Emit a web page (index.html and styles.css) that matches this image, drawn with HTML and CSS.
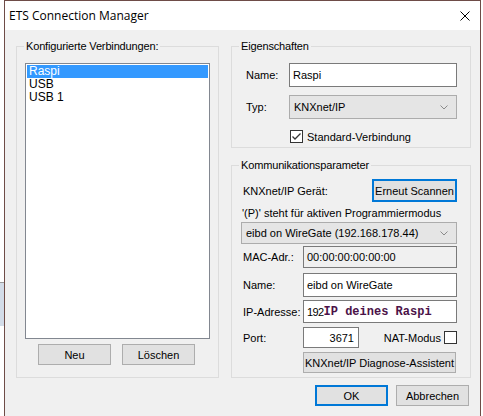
FILE: index.html
```html
<!DOCTYPE html>
<html lang="de">
<head>
<meta charset="utf-8">
<title>ETS Connection Manager</title>
<link rel="stylesheet" href="styles.css">
</head>
<body>
<div class="backdrop"></div>
<div class="window">
  <div class="titlebar">
    <span class="title">ETS Connection Manager</span>
    <svg class="close" width="10" height="10" viewBox="0 0 10 10"><path d="M0.5 0.5 L9.5 9.5 M9.5 0.5 L0.5 9.5" stroke="#000" stroke-width="1" fill="none"/></svg>
  </div>
  <div class="client">
    <div class="columns">
      <div class="group group-left">
        <div class="group-title">Konfigurierte Verbindungen:</div>
        <div class="listbox">
          <div class="item sel">Raspi</div>
          <div class="item">USB</div>
          <div class="item">USB 1</div>
        </div>
        <div class="list-buttons">
          <div class="btn">Neu</div>
          <div class="btn">Löschen</div>
        </div>
      </div>
      <div class="right-col">
        <div class="group props">
          <div class="group-title">Eigenschaften</div>
          <div class="prow name-row">
            <span class="plabel">Name:</span>
            <div class="field field-name">Raspi</div>
          </div>
          <div class="prow typ-row">
            <span class="plabel">Typ:</span>
            <div class="select select-typ"><span>KNXnet/IP</span><svg width="8" height="5" viewBox="0 0 8 5"><path d="M0.5 0.5 L4 4 L7.5 0.5" stroke="#8a8a8a" fill="none"/></svg></div>
          </div>
          <div class="prow check-row">
            <span class="checkbox"><svg width="11" height="11" viewBox="0 0 11 11"><path d="M1.5 5.5 L4 8 L9.5 2.5" stroke="#333" stroke-width="1.3" fill="none"/></svg></span>
            <span class="check-label">Standard-Verbindung</span>
          </div>
        </div>
        <div class="group comm">
          <div class="group-title">Kommunikationsparameter</div>
          <div class="crow row-device">
            <span class="dlabel">KNXnet/IP Gerät:</span>
            <div class="btn btn-focus btn-scan">Erneut Scannen</div>
          </div>
          <div class="crow hint">'(P)' steht für aktiven Programmiermodus</div>
          <div class="crow">
            <div class="select select-device"><span>eibd on WireGate (192.168.178.44)</span><svg width="8" height="5" viewBox="0 0 8 5"><path d="M0.5 0.5 L4 4 L7.5 0.5" stroke="#8a8a8a" fill="none"/></svg></div>
          </div>
          <div class="crow row-mac">
            <span class="clabel">MAC-Adr.:</span>
            <div class="field field-c field-readonly">00:00:00:00:00:00</div>
          </div>
          <div class="crow row-name">
            <span class="clabel">Name:</span>
            <div class="field field-c field-h24">eibd on WireGate</div>
          </div>
          <div class="crow row-ip">
            <span class="clabel">IP-Adresse:</span>
            <div class="field field-c field-ip"><span class="ip-value">192</span><span class="ip-note">IP deines Raspi</span></div>
          </div>
          <div class="crow row-port">
            <span class="clabel">Port:</span>
            <div class="field field-port">3671</div>
            <span class="nat-label">NAT-Modus</span>
            <span class="checkbox"></span>
          </div>
          <div class="crow row-diag">
            <div class="btn btn-diag">KNXnet/IP Diagnose-Assistent</div>
          </div>
        </div>
      </div>
    </div>
    <div class="dialog-buttons">
      <div class="btn btn-focus">OK</div>
      <div class="btn">Abbrechen</div>
    </div>
  </div>
</div>
</body>
</html>
```
FILE: styles.css
```css
* { box-sizing: border-box; }
html, body { margin: 0; padding: 0; }
body {
  background: #fff;
  font-family: "Liberation Sans", Arial, sans-serif;
  font-size: 11px;
  color: #000;
  overflow: hidden;
  height: 416px;
  position: relative;
}
.backdrop {
  position: absolute;
  left: 0;
  top: 282px;
  width: 4px;
  height: 44px;
  background: #d3dce8;
  border-top: 1px solid #9a9a9a;
}
.window {
  margin-left: 4px;
  width: 477px;
  height: 416px;
  border: 1px solid #6e4c47;
  border-bottom: none;
  background: #f0f0f0;
  display: flex;
  flex-direction: column;
  overflow: hidden;
}
.titlebar {
  height: 29px;
  flex: none;
  background: #fff;
  display: flex;
  align-items: center;
  justify-content: space-between;
  padding: 0 10px 0 4px;
}
.title {
  font-family: "Open Sans", "Noto Sans", sans-serif;
  font-size: 12px;
  color: #000;
}
.client {
  padding: 16px 9px 0 11px;
  display: flex;
  flex-direction: column;
}
.columns { display: flex; gap: 12px; }
.group {
  border: 1px solid #dcdcdc;
  display: flex;
  flex-direction: column;
}
.group-title {
  margin: -7px 0 0 7px;
  padding: 0 2px;
  background: #f0f0f0;
  align-self: flex-start;
  line-height: 13px;
  white-space: nowrap;
  letter-spacing: -0.15px;
}
.group-left { width: 203px; height: 332px; }
.listbox {
  margin: 10px 8px 0;
  height: 276px;
  background: #fff;
  border: 1px solid #828790;
  padding: 1px;
}
.item {
  height: 13px;
  line-height: 13px;
  padding-left: 2px;
  font-size: 12px;
}
.item.sel { background: #3399ff; color: #fff; }
.list-buttons {
  display: flex;
  gap: 11px;
  margin: 5px 0 0 21px;
}
.btn {
  width: 73px;
  height: 21px;
  background: #e1e1e1;
  border: 1px solid #adadad;
  display: flex;
  align-items: center;
  justify-content: center;
  white-space: nowrap;
}
.btn-focus {
  border: 1px solid #0078d7;
  box-shadow: inset 0 0 0 1px #0078d7;
}
.right-col {
  width: 240px;
  display: flex;
  flex-direction: column;
  gap: 17px;
}
.props { height: 102px; }
.prow { display: flex; align-items: center; padding-left: 14px; }
.plabel { width: 43px; }
.name-row { margin-top: 10px; }
.field {
  background: #fff;
  border: 1px solid #7a7a7a;
  padding-left: 3px;
  display: flex;
  align-items: center;
  white-space: nowrap;
}
.field-name { width: 168px; height: 24px; }
.typ-row { margin-top: 8px; }
.select {
  background: #e5e5e5;
  border: 1px solid #acacac;
  display: flex;
  align-items: center;
  justify-content: space-between;
  padding: 0 8px 0 4px;
  white-space: nowrap;
}
.select-typ { width: 168px; height: 24px; }
.check-row { margin-top: 11px; padding-left: 58px; }
.checkbox {
  width: 13px;
  height: 13px;
  border: 1px solid #333;
  background: #fff;
  display: inline-flex;
  align-items: center;
  justify-content: center;
  flex: none;
}
.check-label { margin-left: 4px; }
.comm { height: 213px; }
.crow {
  display: flex;
  align-items: center;
  padding: 0 13px 0 9px;
}
.clabel { width: 62px; padding-left: 2px; flex: none; }
.dlabel { padding-left: 2px; white-space: nowrap; }
.row-device { margin-top: 7px; justify-content: space-between; }
.btn-scan { width: 85px; height: 23px; }
.hint { margin-top: 5px; line-height: 13px; padding-left: 10px; }
.select-device { width: 216px; height: 22px; margin-top: 2px; }
.row-mac { margin-top: 2px; }
.field-c { width: 154px; height: 22px; }
.field-readonly { background: #f0f0f0; }
.row-name { margin-top: 5px; }
.field-h24 { height: 24px; }
.row-ip { margin-top: 3px; }
.field-ip { height: 23px; }
.ip-value {
  letter-spacing: -0.6px;
  flex: none;
}
.ip-note {
  font-family: "Liberation Mono", "Courier New", monospace;
  font-weight: bold;
  font-size: 12px;
  color: #4b1248;
  margin-left: 0;
  white-space: nowrap;
}
.row-port { margin-top: 4px; }
.field-port {
  width: 56px;
  height: 21px;
  justify-content: flex-end;
  padding: 0 4px 0 0;
}
.nat-label { margin-left: auto; margin-right: 3px; }
.row-diag { margin-top: 4px; padding-left: 71px; }
.btn-diag { width: 153px; height: 21px; }
.dialog-buttons {
  display: flex;
  justify-content: flex-end;
  gap: 8px;
  margin-top: 7px;
  padding-right: 2px;
}
```
